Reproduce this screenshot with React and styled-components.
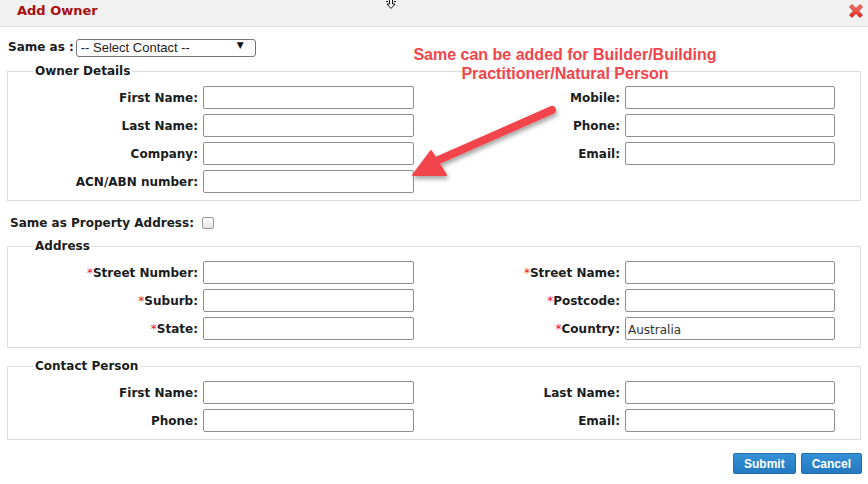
import React from "react";
import styled, { createGlobalStyle } from "styled-components";

const GlobalStyle = createGlobalStyle`
  html, body {
    margin: 0;
    padding: 0;
    background: #fff;
  }
  body {
    font-family: "DejaVu Sans", Verdana, sans-serif;
    color: #1c1c1c;
  }
`;

const ownerRows = [
  ["First Name", "Mobile"],
  ["Last Name", "Phone"],
  ["Company", "Email"],
  ["ACN/ABN number", null],
];

const addressRows = [
  ["Street Number", "Street Name"],
  ["Suburb", "Postcode"],
  ["State", "Country"],
];

const contactRows = [
  ["First Name", "Last Name"],
  ["Phone", "Email"],
];

const values = { Country: "Australia" };

class App extends React.Component {
  renderRows(rows, required) {
    return rows.map(([left, right]) => (
      <React.Fragment key={left}>
        <FieldLabel>
          {required && <Star>*</Star>}
          {left}:
        </FieldLabel>
        <TextInput defaultValue={values[left] || ""} />
        {right ? (
          <>
            <FieldLabel>
              {required && <Star>*</Star>}
              {right}:
            </FieldLabel>
            <TextInput defaultValue={values[right] || ""} />
          </>
        ) : (
          <>
            <span />
            <span />
          </>
        )}
      </React.Fragment>
    ));
  }

  render() {
    return (
      <>
        <GlobalStyle />
        <Modal>
          <Header>
            <Title>Add Owner</Title>
            <CloseButton aria-label="close">
              <svg width="16" height="16" viewBox="0 0 16 16">
                <defs>
                  <linearGradient id="xg" x1="0" y1="0" x2="0" y2="1">
                    <stop offset="0" stopColor="#ff7a6e" />
                    <stop offset="1" stopColor="#d9261c" />
                  </linearGradient>
                </defs>
                <polygon
                  points="1.5,4 4,1.5 8,5.5 12,1.5 14.5,4 10.5,8 14.5,12 12,14.5 8,10.5 4,14.5 1.5,12 5.5,8"
                  fill="url(#xg)"
                  stroke="#c0281f"
                  strokeWidth="0.8"
                  strokeLinejoin="round"
                />
              </svg>
            </CloseButton>
          </Header>

          <Body>
            <SameAsRow>
              <InlineLabel>Same as :</InlineLabel>
              <SelectWrap>
                <Select defaultValue="">
                  <option value="">-- Select Contact --</option>
                </Select>
              </SelectWrap>
            </SameAsRow>

            <Fieldset $top={7}>
              <Legend>Owner Details</Legend>
              <FieldGrid>{this.renderRows(ownerRows, false)}</FieldGrid>
            </Fieldset>

            <CheckRow>
              <InlineLabel>Same as Property Address:</InlineLabel>
              <Checkbox type="checkbox" />
            </CheckRow>

            <Fieldset $top={7}>
              <Legend>Address</Legend>
              <FieldGrid>{this.renderRows(addressRows, true)}</FieldGrid>
            </Fieldset>

            <Fieldset $top={10}>
              <Legend>Contact Person</Legend>
              <FieldGrid>{this.renderRows(contactRows, false)}</FieldGrid>
            </Fieldset>

            <Actions>
              <Button>Submit</Button>
              <Button>Cancel</Button>
            </Actions>
          </Body>

          {/* note pasted over the screenshot */}
          <Note>
            Same can be added for Builder/Building
            <br />
            Practitioner/Natural Person
          </Note>
          <ArrowMark width="170" height="95" viewBox="0 0 170 95">
            <defs>
              <filter id="sh" x="-20%" y="-20%" width="140%" height="150%">
                <feDropShadow dx="1.5" dy="3" stdDeviation="2" floodColor="#000" floodOpacity="0.35" />
              </filter>
            </defs>
            <g filter="url(#sh)" fill="#f2454b" stroke="#f2454b">
              <line x1="152" y1="10" x2="34" y2="62" strokeWidth="8" strokeLinecap="round" />
              <polygon points="13,75 31,51 46,75" strokeWidth="2" strokeLinejoin="round" />
            </g>
          </ArrowMark>
          <MoveCursor width="16" height="10" viewBox="0 0 16 10">
            <path
              d="M6.5 0 L6.5 4 L4 4 L8 8.5 L12 4 L9.5 4 L9.5 0"
              fill="#fff"
              stroke="#111"
              strokeWidth="1"
            />
            <path d="M3 1.5 L5 1.5 M11 1.5 L13 1.5" stroke="#111" strokeWidth="1" />
          </MoveCursor>
        </Modal>
      </>
    );
  }
}

const Modal = styled.div`
  position: relative;
  width: 868px;
  height: 484px;
  background: #fff;
  overflow: hidden;
`;

const Header = styled.div`
  display: flex;
  align-items: center;
  justify-content: space-between;
  height: 22px;
  padding: 0 4px 4px 17px;
  background: #f1f1f1;
  border-bottom: 1px solid #dedede;
`;

const Title = styled.div`
  font-family: "DejaVu Sans", Verdana, sans-serif;
  font-weight: bold;
  font-size: 13px;
  line-height: 22px;
  color: #a80f0f;
`;

const CloseButton = styled.div`
  display: flex;
  width: 16px;
  height: 16px;
  cursor: pointer;
`;

const Body = styled.div`
  padding: 0 7px;
`;

const SameAsRow = styled.div`
  display: flex;
  align-items: center;
  gap: 2px;
  margin-top: 11px;
  padding-left: 1px;
  height: 18px;
`;

const InlineLabel = styled.span`
  font-weight: bold;
  font-size: 12px;
  line-height: 16px;
  color: #1c1c1c;
`;

const SelectWrap = styled.div`
  position: relative;
  &::after {
    content: "▼";
    position: absolute;
    right: 12px;
    top: 3px;
    font-size: 9px;
    color: #111;
    pointer-events: none;
  }
`;

const Select = styled.select`
  appearance: none;
  width: 180px;
  height: 18px;
  padding: 0 0 0 4px;
  border: 1px solid #767676;
  border-radius: 3px;
  background: #fff;
  font-family: "Liberation Sans", Arial, sans-serif;
  font-size: 13px;
  color: #222;
`;

const Fieldset = styled.fieldset`
  margin: ${(p) => p.$top}px 0 0;
  padding: 7px 25px 7px 0;
  border: 1px solid #dcdcdc;
  min-inline-size: 0;
`;

const Legend = styled.legend`
  margin-left: 25px;
  padding: 0 2px;
  font-weight: bold;
  font-size: 12px;
  line-height: 16px;
  color: #1c1c1c;
`;

const FieldGrid = styled.div`
  display: grid;
  grid-template-columns: 190px 211px 1fr 210px;
  grid-auto-rows: 23px;
  column-gap: 5px;
  row-gap: 5px;
  align-items: center;
`;

const FieldLabel = styled.label`
  text-align: right;
  white-space: nowrap;
  font-weight: bold;
  font-size: 12px;
  color: #1c1c1c;
`;

const Star = styled.span`
  color: #e8141c;
  font-weight: normal;
`;

const TextInput = styled.input`
  box-sizing: border-box;
  width: 100%;
  height: 23px;
  padding: 2px 2px 0;
  border: 1px solid #8f8f8f;
  border-radius: 2px;
  font-family: "DejaVu Sans", Verdana, sans-serif;
  font-size: 12px;
  color: #333;
  outline: none;
`;

const CheckRow = styled.div`
  display: flex;
  align-items: center;
  gap: 8px;
  margin-top: 14px;
  padding-left: 3px;
  height: 16px;
`;

const Checkbox = styled.input`
  appearance: none;
  width: 12px;
  height: 12px;
  margin: 0;
  border: 1px solid #9a9a9a;
  border-radius: 2px;
  background: linear-gradient(#fdfdfd, #e4e4e4);
`;

const Actions = styled.div`
  display: flex;
  justify-content: flex-end;
  gap: 5px;
  margin-top: 13px;
  margin-right: -1px;
`;

const Button = styled.button`
  height: 21px;
  padding: 0 10px;
  border: 1px solid #1f6fb0;
  border-radius: 2px;
  background: linear-gradient(#3491d6, #2479c0);
  font-family: "Liberation Sans", Arial, sans-serif;
  font-weight: bold;
  font-size: 12px;
  color: #fff;
  cursor: pointer;
`;

const Note = styled.div`
  position: absolute;
  left: 385px;
  top: 45px;
  width: 360px;
  text-align: center;
  font-family: "Liberation Sans", Arial, sans-serif;
  font-weight: bold;
  font-size: 16px;
  line-height: 19px;
  color: #f2454b;
`;

const ArrowMark = styled.svg`
  position: absolute;
  left: 400px;
  top: 100px;
  overflow: visible;
`;

const MoveCursor = styled.svg`
  position: absolute;
  left: 383px;
  top: 0;
`;

export default App;
